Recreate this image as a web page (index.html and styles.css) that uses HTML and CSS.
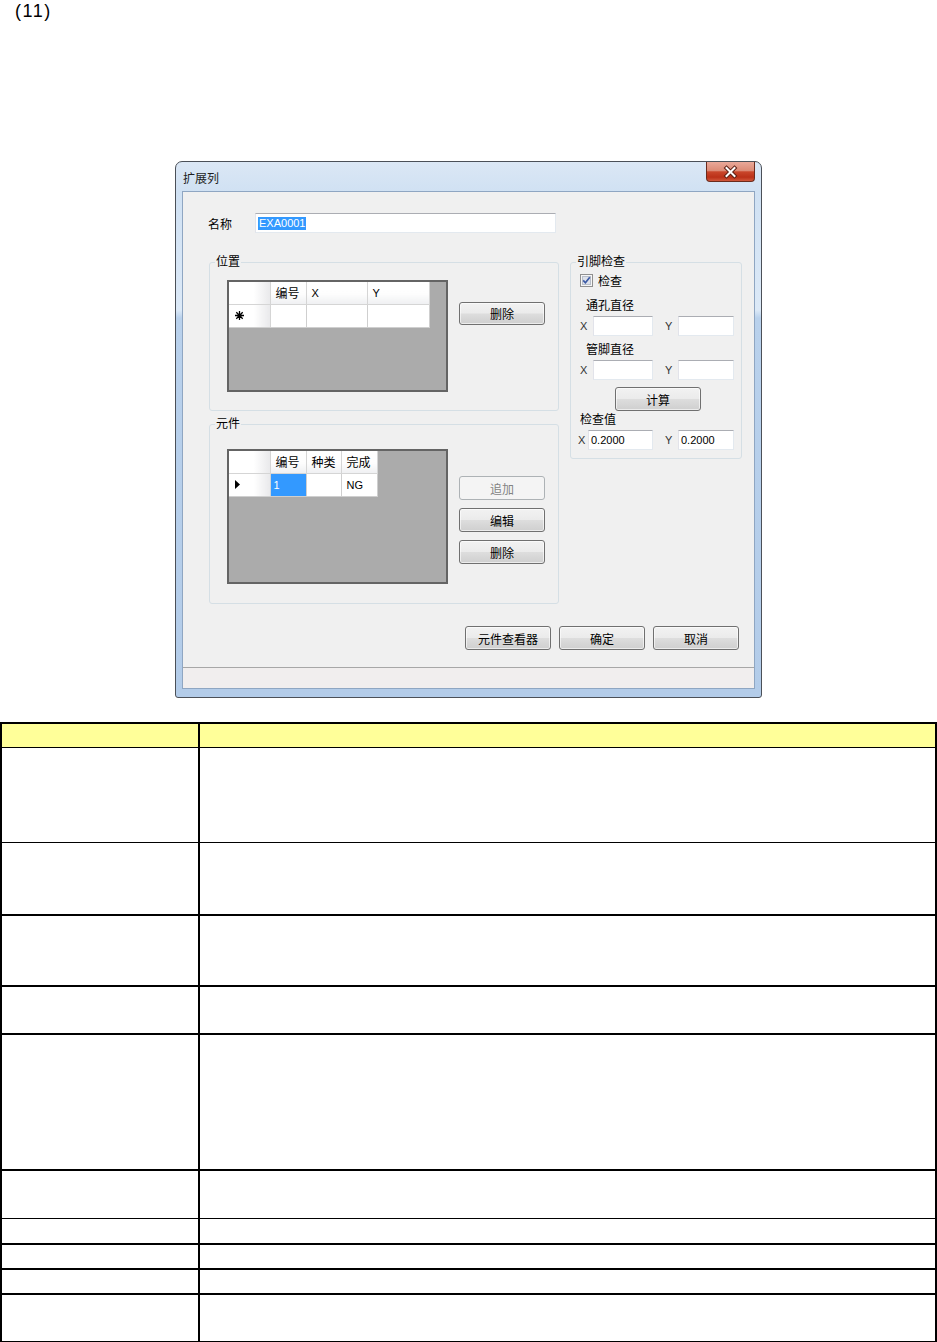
FILE: index.html
```html
<!DOCTYPE html>
<html lang="zh-CN">
<head>
    <meta charset="UTF-8">
    <meta name="viewport" content="width=device-width, initial-scale=1.0">
    <title>扩展列</title>
    <link rel="stylesheet" href="styles.css">
</head>
<body>

    <div class="page-num">(11)</div>

    <div class="window">
        <div class="titlebar">
            <span class="title">扩展列</span>
            <span class="close-btn">
                <svg width="47" height="18" viewBox="0 0 47 18">
                    <path d="M19.5 5 L27.5 13 M27.5 5 L19.5 13" stroke="#5b1e12" stroke-width="4" stroke-linecap="square"/>
                    <path d="M19.5 5 L27.5 13 M27.5 5 L19.5 13" stroke="#fff" stroke-width="2" stroke-linecap="square"/>
                </svg>
            </span>
        </div>

        <div class="client">
            <div class="name-row">
                <span class="name-label">名称</span>
                <div class="textbox name-box"><span class="sel">EXA0001</span></div>
            </div>

            <div class="main">
                <div class="left-col">
                    <fieldset class="group group-pos">
                        <legend>位置</legend>
                        <div class="group-body">
                            <div class="dgv dgv-pos">
                                <table>
                                    <colgroup>
                                        <col class="col-rh"><col style="width:36px"><col style="width:61px"><col style="width:62px">
                                    </colgroup>
                                    <tr class="dgv-head">
                                        <td class="rh"></td><td>编号</td><td class="latin">X</td><td class="latin">Y</td>
                                    </tr>
                                    <tr class="dgv-row">
                                        <td class="rh">
                                            <svg width="9" height="9" viewBox="0 0 9 9">
                                                <path d="M4.5 0 V9 M0 4.5 H9 M1.3 1.3 L7.7 7.7 M7.7 1.3 L1.3 7.7" stroke="#000" stroke-width="1.3"/>
                                            </svg>
                                        </td>
                                        <td></td><td></td><td></td>
                                    </tr>
                                </table>
                            </div>
                            <button class="btn btn-pos-del">删除</button>
                        </div>
                    </fieldset>

                    <fieldset class="group group-parts">
                        <legend>元件</legend>
                        <div class="group-body">
                            <div class="dgv dgv-parts">
                                <table>
                                    <colgroup>
                                        <col class="col-rh"><col style="width:36px"><col style="width:35px"><col style="width:36px">
                                    </colgroup>
                                    <tr class="dgv-head">
                                        <td class="rh"></td><td>编号</td><td>种类</td><td>完成</td>
                                    </tr>
                                    <tr class="dgv-row">
                                        <td class="rh">
                                            <svg width="5" height="9" viewBox="0 0 5 9"><path d="M0 0 L5 4.5 L0 9 Z" fill="#000"/></svg>
                                        </td>
                                        <td class="cell-sel">1</td><td></td><td>NG</td>
                                    </tr>
                                </table>
                            </div>
                            <div class="btn-col">
                                <button class="btn" disabled>追加</button>
                                <button class="btn">编辑</button>
                                <button class="btn">删除</button>
                            </div>
                        </div>
                    </fieldset>
                </div>

                <fieldset class="group group-pin">
                    <legend>引脚检查</legend>
                    <div class="pin-body">
                        <div class="check-row">
                            <svg width="13" height="13" viewBox="0 0 13 13">
                                <rect x="0.5" y="0.5" width="12" height="12" fill="#f6f6f6" stroke="#8f8f8f"/>
                                <rect x="2.5" y="2.5" width="8" height="8" fill="#dde1ea" stroke="#b8bec9"/>
                                <path d="M3.2 6.4 L5.4 8.8 L9.8 3.2" fill="none" stroke="#3b5aa5" stroke-width="1.7"/>
                            </svg>
                            <span>检查</span>
                        </div>

                        <div class="sub-label indent">通孔直径</div>
                        <div class="xy-row">
                            <span class="axis">X</span><div class="textbox num"></div>
                            <span class="axis axis-y">Y</span><div class="textbox num-y"></div>
                        </div>

                        <div class="sub-label indent second">管脚直径</div>
                        <div class="xy-row">
                            <span class="axis">X</span><div class="textbox num"></div>
                            <span class="axis axis-y">Y</span><div class="textbox num-y"></div>
                        </div>

                        <button class="btn btn-calc">计算</button>

                        <div class="sub-label check-val">检查值</div>
                        <div class="xy-row">
                            <span class="axis axis-wide">X</span><div class="textbox num-wide">0.2000</div>
                            <span class="axis axis-y">Y</span><div class="textbox num-y">0.2000</div>
                        </div>
                    </div>
                </fieldset>
            </div>

            <div class="footer">
                <button class="btn">元件查看器</button>
                <button class="btn">确定</button>
                <button class="btn">取消</button>
            </div>

            <div class="statusbar"></div>
        </div>
    </div>

    <table class="spec">
        <colgroup><col class="spec-key"><col></colgroup>
        <tr class="spec-head h25"><td></td><td></td></tr>
        <tr class="thin h95"><td></td><td></td></tr>
        <tr class="thin h72"><td></td><td></td></tr>
        <tr class="h71"><td></td><td></td></tr>
        <tr class="h48"><td></td><td></td></tr>
        <tr class="h136"><td></td><td></td></tr>
        <tr class="h49"><td></td><td></td></tr>
        <tr class="thin h25"><td></td><td></td></tr>
        <tr class="h25"><td></td><td></td></tr>
        <tr class="h25"><td></td><td></td></tr>
        <tr class="h48"><td></td><td></td></tr>
    </table>

</body>
</html>
```

FILE: styles.css
```css
* {
    box-sizing: border-box;
}

body {
    margin: 0;
    font-family: "Liberation Sans", Arial, sans-serif;
    background-color: #fff;
    color: #000;
}

.page-num {
    height: 22px;
    padding-left: 15px;
    font-family: "Liberation Sans", Arial, sans-serif;
    font-size: 18px;
    letter-spacing: 1.5px;
    line-height: 22px;
}

/* ---- window frame ---- */

.window {
    width: 587px;
    margin: 139px 0 0 175px;
    padding: 0 7px 9px;
    border: 1px solid #4b5058;
    border-radius: 7px 7px 3px 3px;
    background: linear-gradient(to bottom, #dbe7f5 0, #d0e1f3 30px, #dce9f7 148px, #b9d1ec 156px, #b3cce9 100%);
    font: 12px "Liberation Sans", "Noto Sans CJK SC", sans-serif;
}

.titlebar {
    height: 30px;
    margin: 0 -7px;
    padding: 0 6px 0 7px;
    display: flex;
    align-items: center;
    justify-content: space-between;
}

.title {
    color: #1e1e1e;
}

.close-btn {
    align-self: flex-start;
    width: 49px;
    height: 20px;
    border: 1px solid #6b2a1c;
    border-top: none;
    border-radius: 0 0 4px 4px;
    background: linear-gradient(to bottom, #e9a899 0, #dc8b76 45%, #c9462b 52%, #bb3118 80%, #d0573b 100%);
    display: flex;
    align-items: center;
    justify-content: center;
}

.client {
    height: 496px;
    background-color: #f0f0f0;
    box-shadow: 0 0 0 1px #8fa6c2;
    display: flex;
    flex-direction: column;
}

/* ---- name row ---- */

.name-row {
    margin-top: 21px;
    height: 20px;
    padding-left: 25px;
    display: flex;
    align-items: center;
}

.name-label {
    width: 47px;
}

.textbox {
    height: 20px;
    background-color: #fff;
    border: 1px solid;
    border-color: #abadb3 #e3e9ef #e3e9ef #e2e3ea;
    display: flex;
    align-items: center;
    padding-left: 2px;
    white-space: nowrap;
    font-size: 11px;
}

.name-box {
    width: 301px;
}

.sel {
    background-color: #3399ff;
    color: #fff;
    line-height: 13px;
    padding: 0 1px;
}

/* ---- group boxes ---- */

.main {
    margin-top: 22px;
    padding-left: 26px;
    display: flex;
    gap: 11px;
}

.left-col {
    width: 350px;
    display: flex;
    flex-direction: column;
    gap: 6px;
}

.group {
    margin: 0;
    padding: 0;
    min-width: 0;
    border: 1px solid #d5dfe5;
    border-radius: 3px;
}

.group legend {
    margin-left: 5px;
    padding: 0 1px;
    line-height: 14px;
}

.group-pos {
    height: 156px;
}

.group-parts {
    height: 187px;
}

.group-pin {
    width: 172px;
    height: 204px;
}

.group-body {
    display: flex;
    gap: 11px;
    align-items: flex-start;
    padding-left: 17px;
}

.group-pos .group-body {
    padding-top: 11px;
}

.group-parts .group-body {
    padding-top: 18px;
}

/* ---- grid ---- */

.dgv {
    width: 221px;
    border: 2px solid #646464;
    background-color: #ababab;
}

.dgv-pos {
    height: 112px;
}

.dgv-parts {
    height: 135px;
}

.dgv table {
    border-collapse: collapse;
    table-layout: fixed;
}

.col-rh {
    width: 41px;
}

.dgv td {
    padding: 0 0 0 5px;
    white-space: nowrap;
    overflow: hidden;
}

.dgv td.latin {
    font-size: 11px;
}

.dgv-head td {
    height: 22px;
    background: linear-gradient(to bottom, #fff 0, #fdfdfd 55%, #eff0f2 100%);
    border-right: 1px solid #d5d5d5;
    border-bottom: 1px solid #d5d5d5;
}

.dgv-row td {
    height: 23px;
    font-size: 11px;
    background-color: #fff;
    border-right: 1px solid #cfcfcf;
    border-bottom: 1px solid #cfcfcf;
}

.dgv td.rh {
    background: linear-gradient(to right, #fff 0, #fff 60%, #e9e9eb 100%);
    border-right: 1px solid #d5d5d5;
    padding-left: 6px;
}

.dgv-row td.rh svg {
    display: block;
}

.dgv td.cell-sel {
    background-color: #3399ff;
    color: #fff;
    padding-left: 3px;
}

/* ---- buttons ---- */

.btn {
    width: 86px;
    height: 24px;
    padding: 0;
    font: inherit;
    color: #000;
    border: 1px solid #707070;
    border-radius: 3px;
    background: linear-gradient(to bottom, #f2f2f2 0, #ebebeb 48%, #dddddd 52%, #cfcfcf 100%);
    box-shadow: inset 0 0 0 1px rgba(255, 255, 255, 0.6);
}

.btn:disabled {
    color: #838383;
    border-color: #adb2b5;
    background: #f4f4f4;
    box-shadow: none;
}

.btn-pos-del {
    height: 23px;
    margin-top: 22px;
}

.btn-col {
    margin-top: 27px;
    display: flex;
    flex-direction: column;
    gap: 8px;
}

/* ---- pin group ---- */

.pin-body {
    padding: 5px 0 0 9px;
    display: flex;
    flex-direction: column;
    align-items: flex-start;
}

.check-row {
    height: 13px;
    display: flex;
    align-items: center;
    gap: 5px;
}

.sub-label {
    line-height: 14px;
}

.indent {
    margin-top: 12px;
    padding-left: 6px;
}

.indent.second {
    margin-top: 7px;
}

.check-val {
    margin-top: 2px;
}

.xy-row {
    margin-top: 3px;
    display: flex;
    align-items: center;
}

.axis {
    width: 13px;
    font-size: 11px;
    color: #333;
}

.axis-y {
    margin-left: 12px;
}

.axis-wide {
    width: 10px;
    margin-left: -2px;
}

.num {
    width: 60px;
}

.num-wide {
    width: 65px;
}

.num-y {
    width: 56px;
}

.btn-calc {
    margin: 7px 0 0 35px;
}

/* ---- bottom ---- */

.footer {
    margin-top: 22px;
    padding-right: 15px;
    display: flex;
    justify-content: flex-end;
    gap: 8px;
}

.statusbar {
    margin-top: auto;
    height: 21px;
    border-top: 1px solid #a7a7a7;
    background-color: #f1eeee;
}

/* ---- description table ---- */

.spec {
    width: 937px;
    margin-top: 24px;
    border-collapse: separate;
    border-spacing: 0;
    table-layout: fixed;
    border-right: 2px solid #000;
    border-bottom: 2px solid #000;
}

.spec-key {
    width: 198px;
}

.spec td {
    padding: 0;
    border-top: 2px solid #000;
    border-left: 2px solid #000;
}

.spec tr.thin td {
    border-top-width: 1px;
}

.spec-head td {
    background-color: #ffff99;
}

.h25 { height: 25px; }
.h48 { height: 48px; }
.h49 { height: 49px; }
.h71 { height: 71px; }
.h72 { height: 72px; }
.h95 { height: 95px; }
.h136 { height: 136px; }
```
